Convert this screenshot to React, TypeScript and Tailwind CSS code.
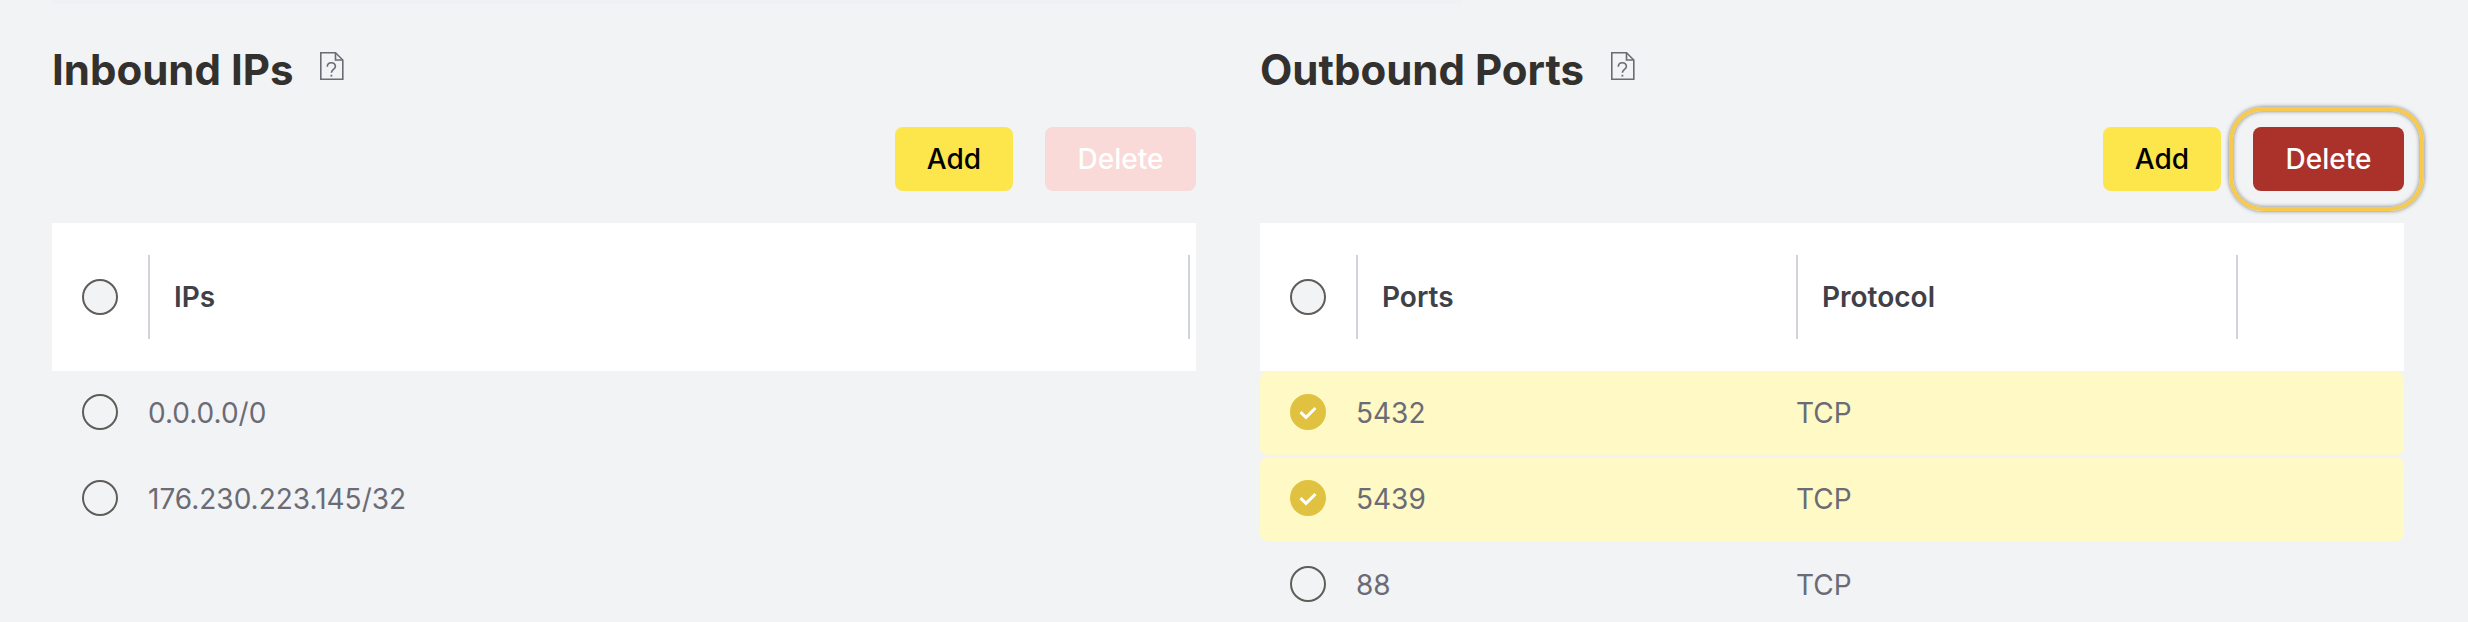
import { useState } from 'react';
import clsx from 'clsx';

type Column = { label: string; width: string };

const IP_COLUMNS: Column[] = [{ label: 'IPs', width: 'w-10/11' }];
const IP_ROWS = [['0.0.0.0/0'], ['176.230.223.145/32']];

const PORT_COLUMNS: Column[] = [
  { label: 'Ports', width: 'w-5/13' },
  { label: 'Protocol', width: 'w-5/13' },
];
const PORT_ROWS = [
  ['5432', 'TCP'],
  ['5439', 'TCP'],
  ['88', 'TCP'],
];

function HelpIcon() {
  return (
    <svg viewBox="0 0 24 28" className="h-7 w-6" fill="none" stroke="#6b6b76" strokeWidth="1.6">
      <path d="M.8 .8H15.5L22.8 8V27.2H.8Z" />
      <path d="M15.5 .8V8H22.8" />
      <path d="M7.3 14.8C7.3 9.4 15.4 9.4 15.4 14.4C15.4 17.4 11.4 17.4 11.4 20.8" />
      <path d="M11.4 22.8V24.6" strokeWidth="1.8" />
    </svg>
  );
}

function RoundCheckbox({ label, checked, onChange }: { label: string; checked: boolean; onChange: () => void }) {
  return (
    <span className="grid h-9 w-9">
      <input
        type="checkbox"
        aria-label={label}
        checked={checked}
        onChange={onChange}
        className="col-start-1 row-start-1 h-9 w-9 cursor-pointer appearance-none rounded-full border-2 border-[#5f5d59] bg-[#f2f3f5] checked:border-[#e0c240] checked:bg-[#e0c240]"
      />
      {checked && (
        <svg
          viewBox="0 0 36 36"
          className="pointer-events-none col-start-1 row-start-1 h-9 w-9"
          fill="none"
          stroke="#fff"
          strokeWidth="3"
        >
          <path d="M10.5 18.2L16 23.4L25.5 14" />
        </svg>
      )}
    </span>
  );
}

type PanelProps = {
  title: string;
  columns: Column[];
  rows: string[][];
  initialSelected?: number[];
  highlightDelete?: boolean;
};

function AccessPanel({ title, columns, rows, initialSelected = [], highlightDelete }: PanelProps) {
  const [selected, setSelected] = useState<number[]>(initialSelected);
  const allSelected = selected.length === rows.length;

  const toggle = (index: number) =>
    setSelected((prev) => (prev.includes(index) ? prev.filter((i) => i !== index) : [...prev, index]));

  return (
    <section className="min-w-0 flex-1">
      <div className="flex items-start gap-[27px]">
        <h2 className="text-[42px] leading-[50px] font-bold text-[#33312e]">{title}</h2>
        <a href="#help" aria-label={`${title} help`} className="flex h-[42px] items-center">
          <HelpIcon />
        </a>
      </div>

      <div className="mt-8 flex justify-end gap-8">
        <button type="button" className="h-16 min-w-[118px] rounded-lg bg-[#fde54c] px-8 text-[28px] font-medium text-black">
          Add
        </button>
        <div className="relative">
          <button
            type="button"
            disabled={selected.length === 0}
            className="h-16 min-w-[151px] rounded-lg bg-[#ab322b] px-8 text-[28px] font-medium text-white disabled:bg-[#f9dad8]"
          >
            Delete
          </button>
          {highlightDelete && (
            <span className="pointer-events-none absolute -inset-y-5 -right-5 -left-6 rounded-[34px] border-4 border-[#f7ca4d] shadow-[0_0_4px_rgba(0,0,0,0.5),inset_0_0_4px_rgba(0,0,0,0.5)]" />
          )}
        </div>
      </div>

      <table className="mt-8 w-full table-fixed border-separate border-spacing-0 text-left text-[28px]">
        <thead>
          <tr className="bg-white">
            <th className="w-24 p-0 pl-[30px]">
              <RoundCheckbox
                label="Select all"
                checked={allSelected}
                onChange={() => setSelected(allSelected ? [] : rows.map((_, i) => i))}
              />
            </th>
            {columns.map((column) => (
              <th key={column.label} className={clsx('px-0 py-8 font-semibold text-[#404048]', column.width)}>
                <div className="flex h-[84px] items-center border-l-2 border-[#d1d3da] pl-6">{column.label}</div>
              </th>
            ))}
            <td className="px-0 py-8">
              <div className="h-[84px] border-l-2 border-[#d1d3da]" />
            </td>
          </tr>
        </thead>
        <tbody className="text-[#6b6b76]">
          {rows.map((row, index) => {
            const isSelected = selected.includes(index);
            const cell = clsx('h-[86px] border-b-2 border-transparent bg-clip-padding', isSelected && 'bg-[#fef9c5]');
            return (
              <tr key={row[0]}>
                <td className={clsx(cell, 'rounded-l-lg pt-[23px] pr-0 pb-0 pl-[30px] align-top')}>
                  <RoundCheckbox label={`Select ${row[0]}`} checked={isSelected} onChange={() => toggle(index)} />
                </td>
                {row.map((value, i) => (
                  <td key={i} className={clsx(cell, 'p-0')}>
                    {value}
                  </td>
                ))}
                <td className={clsx(cell, 'rounded-r-lg p-0')} />
              </tr>
            );
          })}
        </tbody>
      </table>
    </section>
  );
}

export default function App() {
  return (
    <main className="h-screen overflow-hidden bg-[#f2f3f5] pr-16 pl-[52px] font-['Inter',sans-serif]">
      {/* bottom edge of the card above */}
      <div className="h-1 w-3/5 rounded-b-lg bg-[#f0f1f4]" />
      <div className="flex gap-16 pt-[41px]">
        <AccessPanel title="Inbound IPs" columns={IP_COLUMNS} rows={IP_ROWS} />
        <AccessPanel
          title="Outbound Ports"
          columns={PORT_COLUMNS}
          rows={PORT_ROWS}
          initialSelected={[0, 1]}
          highlightDelete
        />
      </div>
    </main>
  );
}
